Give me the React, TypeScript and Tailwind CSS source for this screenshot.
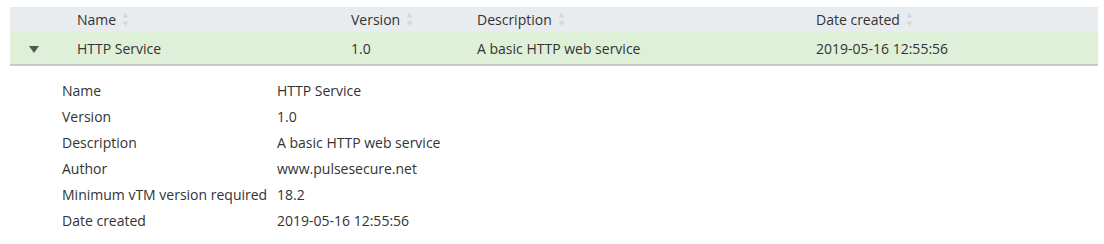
import React from 'react';

const SortIcon: React.FC = () => (
  <svg width="7" height="15" viewBox="0 0 7 15" className="ml-1.5 shrink-0">
    <path d="M3.5 1 L6.5 5.5 L0.5 5.5 Z" fill="#d3d7db" />
    <path d="M3.5 14 L6.5 9.5 L0.5 9.5 Z" fill="#d3d7db" />
  </svg>
);

const columns = ['Name', 'Version', 'Description', 'Date created'];

const details: [string, string][] = [
  ['Name', 'HTTP Service'],
  ['Version', '1.0'],
  ['Description', 'A basic HTTP web service'],
  ['Author', 'www.pulsesecure.net'],
  ['Minimum vTM version required', '18.2'],
  ['Date created', '2019-05-16 12:55:56'],
];

const App: React.FC = () => {
  const grid = 'grid grid-cols-[55px_274px_126px_339px_1fr]';

  return (
    <div
      className="w-[1104px] h-[244px] bg-white text-[14px] text-[#333]"
      style={{ fontFamily: '"Open Sans", "Liberation Sans", sans-serif' }}
    >
      <div className="pt-[7px] pl-[10px] pr-[6px]">
        <div className={`${grid} h-[25px] bg-[#e9ecef] items-center`}>
          <div />
          {columns.map(col => (
            <div key={col} className="flex items-center pl-3">
              <span>{col}</span>
              <SortIcon />
            </div>
          ))}
        </div>
        <div className={`${grid} h-[34px] bg-[#dff0d8] border-b-2 border-[#c6cbc4] items-center`}>
          <div className="flex pl-[19px] pt-[3px]">
            <svg width="10" height="7" viewBox="0 0 10 7">
              <path d="M0 0 L10 0 L5 7 Z" fill="#555" />
            </svg>
          </div>
          <div className="pl-3">HTTP Service</div>
          <div className="pl-3">1.0</div>
          <div className="pl-3">A basic HTTP web service</div>
          <div className="pl-3">2019-05-16 12:55:56</div>
        </div>
      </div>
      <div className="pt-[11px] pl-[62px]">
        {details.map(([label, value]) => (
          <div key={label} className="flex h-[26px] items-center">
            <span className="w-[215px] shrink-0">{label}</span>
            <span>{value}</span>
          </div>
        ))}
      </div>
    </div>
  );
};

export default App;
